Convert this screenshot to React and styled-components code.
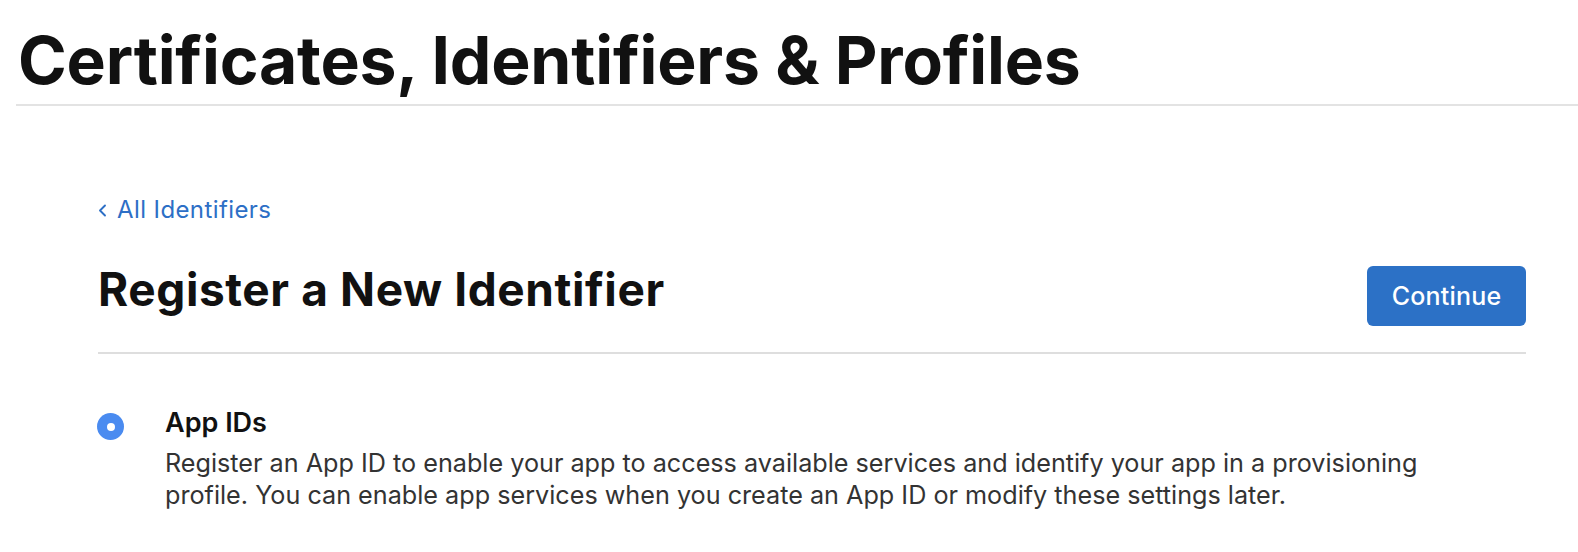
import React from 'react'
import styled, { createGlobalStyle } from 'styled-components';

const GlobalStyle = createGlobalStyle`
  html, body {
    margin: 0;
    padding: 0;
    background: #ffffff;
    font-family: Inter, "Noto Sans", "Liberation Sans", sans-serif;
    color: #111111;
  }
`;

const Page = styled.div`
  width: 1578px;
  height: 552px;
  overflow: hidden;
`;

const Header = styled.header`
  margin-left: 16px;
  border-bottom: 2px solid #e3e3e3;
  padding: 20px 0 4px 2px;
`;

const PageTitle = styled.h1`
  margin: 0;
  font-size: 66px;
  font-weight: 700;
  line-height: 80px;
  letter-spacing: -0.2px;
  color: #111111;
`;

const Content = styled.main`
  margin-left: 98px;
  width: 1428px;
  padding-top: 89px;
`;

const BackLink = styled.a`
  display: flex;
  align-items: center;
  gap: 10px;
  font-size: 24px;
  line-height: 30px;
  letter-spacing: 0.4px;
  color: #2d6fc6;
  text-decoration: none;
  cursor: pointer;
`;

const TitleRow = styled.div`
  display: flex;
  justify-content: space-between;
  align-items: flex-start;
  margin-top: 36px;
  padding-bottom: 26px;
  border-bottom: 2px solid #dedede;
`;

const SectionTitle = styled.h2`
  margin: 0;
  font-size: 46px;
  font-weight: 700;
  line-height: 56px;
  letter-spacing: 0.6px;
  color: #111111;
`;

const PrimaryButton = styled.button`
  width: 159px;
  height: 60px;
  margin-top: 5px;
  border: none;
  border-radius: 6px;
  background: #2c71c6;
  color: #ffffff;
  font-family: inherit;
  font-size: 25px;
  font-weight: 500;
  letter-spacing: 0.2px;
  cursor: pointer;
`;

const OptionRow = styled.label`
  display: flex;
  align-items: flex-start;
  gap: 41px;
  margin-top: 53px;
`;

const Radio = styled.span`
  flex: none;
  width: 27px;
  height: 27px;
  margin: 6px 0 0 -1px;
  border-radius: 50%;
  background: ${p => (p.checked ? '#4a8bf0' : '#ffffff')};
  display: flex;
  align-items: center;
  justify-content: center;

  &::after {
    content: '';
    width: 8px;
    height: 8px;
    border-radius: 50%;
    background: #ffffff;
  }
`;

const OptionText = styled.div`
  display: flex;
  flex-direction: column;
`;

const OptionName = styled.span`
  font-size: 27px;
  font-weight: 600;
  line-height: 32px;
  color: #111111;
`;

const OptionDesc = styled.p`
  margin: 8px 0 0;
  width: 1300px;
  font-size: 25.2px;
  line-height: 32px;
  color: #333333;
`;

function Chevron() {
  return (
    <svg width="9" height="13" viewBox="0 0 9 13" fill="none">
      <path d="M7 1.5 L2 6.5 L7 11.5" stroke="#2d6fc6" strokeWidth="1.9" strokeLinecap="round" strokeLinejoin="round" />
    </svg>
  );
}

export default function App() {
  return (
    <Page>
      <GlobalStyle />
      <Header>
        <PageTitle>Certificates, Identifiers &amp; Profiles</PageTitle>
      </Header>
      <Content>
        <BackLink><Chevron />All Identifiers</BackLink>
        <TitleRow>
          <SectionTitle>Register a New Identifier</SectionTitle>
          <PrimaryButton>Continue</PrimaryButton>
        </TitleRow>
        <OptionRow>
          <Radio checked />
          <OptionText>
            <OptionName>App IDs</OptionName>
            <OptionDesc>
              Register an App ID to enable your app to access available services and identify your app in a provisioning profile. You can enable app services when you create an App ID or modify these settings later.
            </OptionDesc>
          </OptionText>
        </OptionRow>
      </Content>
    </Page>
  );
}
